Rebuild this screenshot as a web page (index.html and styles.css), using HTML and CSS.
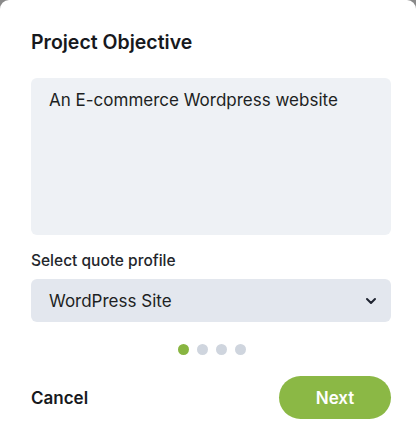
FILE: index.html
```html
<!DOCTYPE html>
<html>
<head>
<meta charset="utf-8">
<link rel="stylesheet" href="styles.css">
</head>
<body>
<div class="sheet">
  <h1 class="title">Project Objective</h1>
  <div class="textarea">An E-commerce Wordpress website</div>
  <label class="label">Select quote profile</label>
  <div class="select">
    <span>WordPress Site</span>
    <svg class="chev" width="12" height="8" viewBox="0 0 12 8"><path d="M2 2l4 4 4-4" fill="none" stroke="#1f2430" stroke-width="2" stroke-linecap="round" stroke-linejoin="round"/></svg>
  </div>
  <div class="dots">
    <span class="dot active"></span><span class="dot"></span><span class="dot"></span><span class="dot"></span>
  </div>
  <div class="actions">
    <button class="cancel">Cancel</button>
    <button class="next">Next</button>
  </div>
</div>
</body>
</html>
```
FILE: styles.css
```css
html, body {
  margin: 0;
  padding: 0;
  background: #8a8a8a;
}
body {
  width: 416px;
  height: 444px;
  overflow: hidden;
  font-family: Inter, "Noto Sans", sans-serif;
  color: #17191d;
}
.sheet {
  background: #fff;
  height: 444px;
  box-sizing: border-box;
  padding: 30px 25px 0 31px;
  border-radius: 9px 9px 0 0;
  display: flex;
  flex-direction: column;
}
.title {
  margin: 0;
  font-size: 19.5px;
  font-weight: 600;
  line-height: 24px;
}
.textarea {
  margin-top: 24px;
  height: 157px;
  box-sizing: border-box;
  background: #eef1f5;
  border-radius: 6px;
  padding: 11px 18px;
  font-size: 17px;
  line-height: 22px;
  color: #1d1f23;
}
.label {
  margin-top: 16px;
  font-size: 15.5px;
  font-weight: 500;
  line-height: 20px;
  color: #23262b;
}
.select {
  margin-top: 8px;
  height: 43px;
  background: #e3e7ee;
  border-radius: 6px;
  padding: 0 18px;
  display: flex;
  align-items: center;
  justify-content: space-between;
  font-size: 17px;
  color: #1d1f23;
}
.chev {
  margin-right: -4px;
}
.dots {
  margin-top: 22px;
  display: flex;
  justify-content: center;
  gap: 8px;
  padding-left: 1px;
}
.dot {
  width: 11px;
  height: 11px;
  border-radius: 50%;
  background: #cfd5de;
}
.dot.active {
  background: #88b541;
}
.actions {
  margin-top: 21px;
  display: flex;
  justify-content: space-between;
  align-items: center;
}
.cancel {
  border: 0;
  background: none;
  padding: 0;
  font-family: inherit;
  font-size: 17px;
  font-weight: 600;
  color: #17191d;
}
.next {
  border: 0;
  width: 112px;
  height: 43px;
  border-radius: 22px;
  background: #8bb845;
  color: #fff;
  font-family: inherit;
  font-size: 17px;
  font-weight: 600;
}
```
